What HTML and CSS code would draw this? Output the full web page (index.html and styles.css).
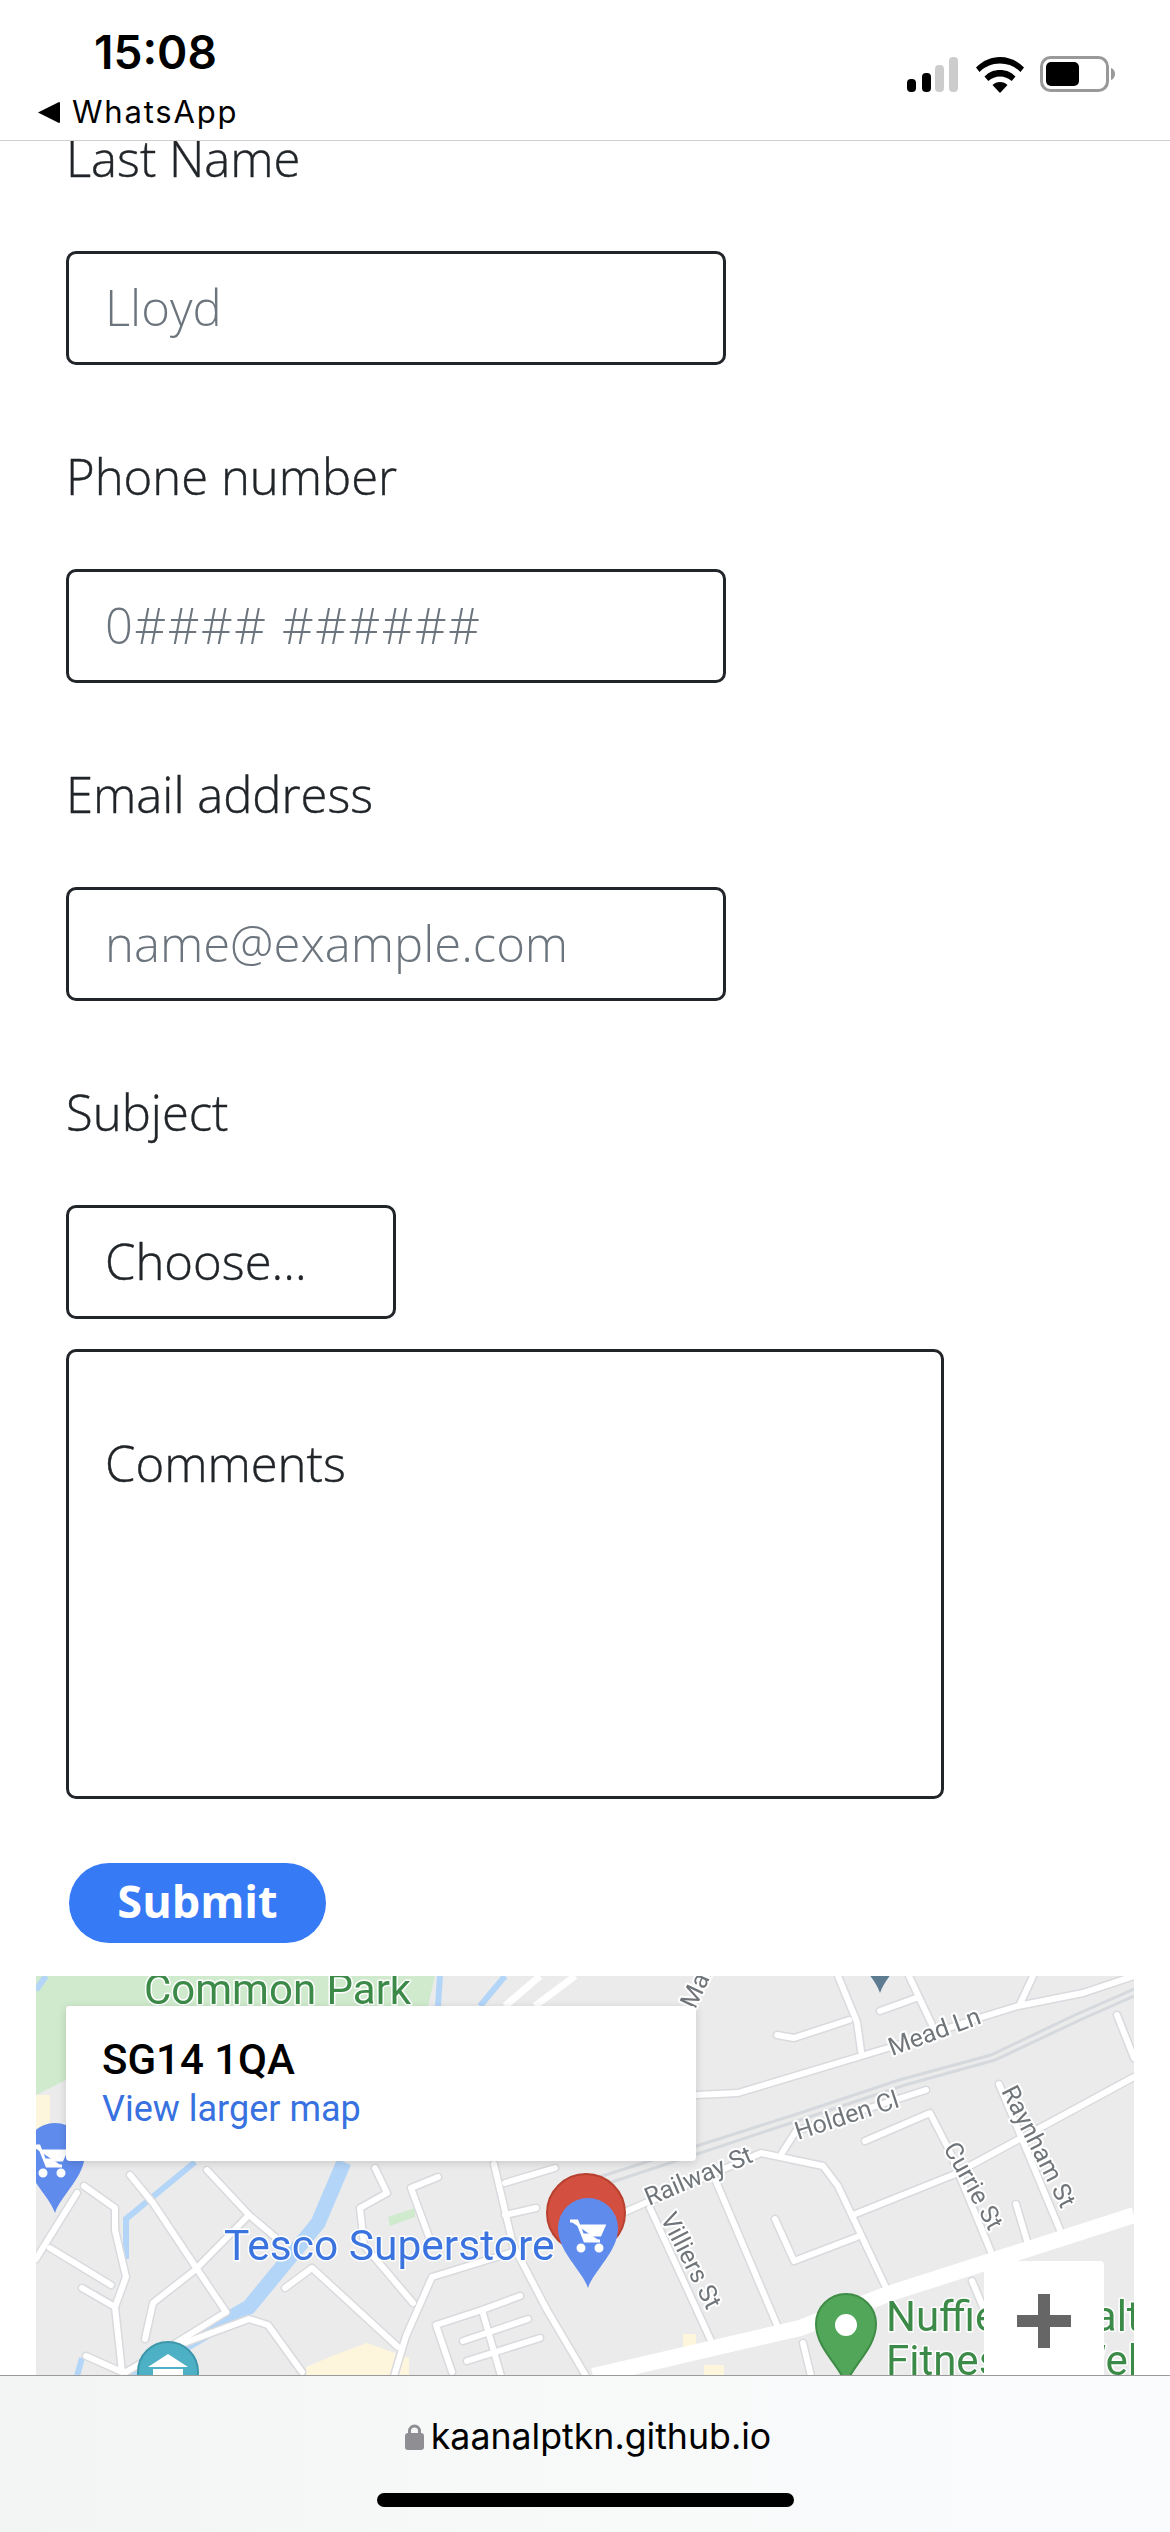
FILE: index.html
```html
<!DOCTYPE html>
<html lang="en">
<head>
    <meta charset="UTF-8">
    <meta name="viewport" content="width=device-width, initial-scale=1.0">
    <title>Contact</title>
    <link rel="stylesheet" href="styles.css">
</head>
<body>
    <div class="phone">
        <header class="status-bar">
            <div class="status-left">
                <div class="time">15:08</div>
                <div class="back">
                    <svg class="back-arrow" viewBox="0 0 22 21"><path d="M0 10.5 21 0a1 1 0 0 1 1 1v19a1 1 0 0 1-1 1z"/></svg>
                    <span>WhatsApp</span>
                </div>
            </div>
            <svg class="status-icons" viewBox="0 0 210 38">
                <rect x="0" y="23" width="9" height="13" rx="4"/>
                <rect x="15" y="17" width="9" height="19" rx="4"/>
                <rect class="off" x="28" y="9" width="9" height="27" rx="4"/>
                <rect class="off" x="42" y="1" width="9" height="35" rx="4"/>
                <g transform="translate(25 0)">
                    <path d="M92 11.500C85 4.500 77 1 68 1 59 1 51 4.500 44 11.500l3.500 4.500C53 10.500 60 7.500 68 7.500s15 3 20.500 8.500z"/>
                    <path d="M83.500 20.500C79 16 74 14 68 14s-11 2-15.500 6.500l3.800 4.600C60 22 63.500 20.500 68 20.500s8 1.500 11.700 4.600z"/>
                    <path d="M75.500 29C73.500 27 71 26 68 26s-5.500 1-7.500 3L68 37z"/>
                </g>
                <rect class="batt" x="134.500" y="1.500" width="66" height="33" rx="9"/>
                <rect x="139" y="6" width="33" height="24" rx="5"/>
                <path class="nub" d="M204 12c3 1 4 3.500 4 6s-1 5-4 6z"/>
            </svg>
        </header>

        <main class="page">
            <form class="contact-form">
                <label for="last-name">Last Name</label>
                <input class="field" type="text" id="last-name" placeholder="Lloyd">

                <label for="phone">Phone number</label>
                <input class="field phone-field" type="text" id="phone" placeholder="0#### ######">

                <label for="email">Email address</label>
                <input class="field" type="text" id="email" placeholder="name@example.com">

                <label for="subject">Subject</label>
                <select class="field subject" id="subject">
                    <option>Choose...</option>
                </select>

                <textarea class="comments" id="comments">Comments</textarea>

                <button class="submit" type="button">Submit</button>
            </form>

            <section class="map">
                <svg class="map-art" viewBox="36 1976 1098 400">
                    <defs>
                        <g id="roads">
                            <path d="M696 2095 738 2093 888 2048 979 2018 1018 2006 1083 1993 1134 1976"/>
                            <path d="M838 1976 857 2022 861 2051M777 2035 794 2038 849 2020M880 2011 916 1998M909 1976 934 2029M1033 1976 1020 2004M1117 2015 1134 2058"/>
                            <path d="M625 2212 650 2201 761 2153 823 2166 838 2186 888 2292"/>
                            <path d="M782 2153 796 2131 895 2100 926 2090"/>
                            <path d="M865 2141 930 2113 949 2150 991 2252"/>
                            <path d="M853 2215 953 2175 1134 2077M999 2084 1060 2230M1016 2204 1027 2241"/>
                            <path d="M775 2219 794 2261 857 2237M715 2179 777 2325M650 2208 712 2343M803 2343 811 2376M972 2281 983 2307"/>
                            <path d="M130 2175 153 2203 195 2266 226 2312M207 2170 249 2215 195 2270 153 2303 145 2339"/>
                            <path d="M249 2215 275 2237M285 2288 312 2268 398 2347M432 2277 406 2336 394 2376M432 2277 513 2252"/>
                            <path d="M494 2164 513 2245 547 2310 586 2376M226 2312 176 2343 126 2372M86 2356 122 2372 115 2307 126 2277 115 2230 115 2208 84 2186"/>
                            <path d="M82 2288 115 2307M50 2248 111 2285M36 2259 77 2193M184 2343 249 2319 268 2325 302 2372"/>
                            <path d="M436 2325 452 2372M463 2341 528 2319M467 2361 540 2338M482 2310 501 2376M436 2325 482 2310 520 2296"/>
                            <path d="M411 2188 438 2177M411 2188 429 2237M505 2183 555 2168M505 2215 536 2208"/>
                            <path d="M375 2168 387 2193 360 2208 364 2245 413 2303M460 2120 470 2150M240 2062 280 2070"/>
                        </g>
                        <path id="pin" d="M0 60C-6 42-30 24-30 0A30 30 0 1 1 30 0C30 24 6 42 0 60Z"/>
                        <g id="cart">
                            <path d="M-18-7H-11L-3 13H12M-9-2H16L12 7H-5"/>
                            <circle cx="-7" cy="20" r="3"/>
                            <circle cx="11" cy="20" r="3"/>
                        </g>
                    </defs>

                    <rect class="land" x="36" y="1976" width="1098" height="400"/>
                    <path class="park" d="M36 1976H435L428 2006H66V2080L36 2095Z"/>
                    <path class="park" d="M388 2217 415 2208V2217L390 2226Z"/>
                    <path class="sand" d="M36 2095H50V2130H36ZM337 2354 367 2343 409 2358V2376H306V2367ZM683 2334H696V2348H683ZM704 2365H724V2376H704Z"/>

                    <path class="river" d="M344 2162 318 2223 249 2307 180 2347 130 2376"/>
                    <path class="river thin" d="M195 2162 126 2219V2259M77 2376 82 2358M440 1976 438 2006M505 1976 480 2006M36 1990 46 1976"/>

                    <path class="rail" d="M593 2179 800 2113 899 2080 991 2055 1075 2015 1134 1989"/>
                    <path class="rail" d="M600 2186 800 2120 905 2085 995 2060 1080 2020 1134 1996"/>

                    <g class="road-case"><use href="#roads"/></g>
                    <g class="road-fill"><use href="#roads"/></g>
                    <path class="main-road" d="M593 2376 800 2328 888 2294 1134 2215"/>
                    <path class="side-road" d="M540 1976 505 2006M575 1976 535 2006"/>

                    <text class="street" transform="translate(892 2056) rotate(-20)">Mead Ln</text>
                    <text class="street" transform="translate(798 2140) rotate(-18)">Holden Cl</text>
                    <text class="street" transform="translate(649 2206) rotate(-23)">Railway St</text>
                    <text class="street" transform="translate(660 2218) rotate(63)">Villiers St</text>
                    <text class="street" transform="translate(943 2148) rotate(61)">Currie St</text>
                    <text class="street" transform="translate(1001 2091) rotate(63)">Raynham St</text>
                    <text class="street" transform="translate(695 2010) rotate(-65)">Mar</text>

                    <text class="label-green" x="144" y="2004">Common Park</text>
                    <text class="label-blue" x="224" y="2260">Tesco Superstore</text>
                    <text class="label-green" x="886" y="2331">Nuffield Health</text>
                    <text class="label-green" x="886" y="2375">Fitness &amp; Well</text>

                    <circle class="pin-red" cx="586" cy="2213" r="39"/>
                    <use class="pin-blue" href="#pin" transform="translate(55 2153)"/>
                    <use class="pin-cart" href="#cart" transform="translate(50 2153)"/>
                    <use class="pin-blue" href="#pin" transform="translate(588 2228)"/>
                    <use class="pin-cart" href="#cart" transform="translate(588 2228)"/>
                    <use class="pin-green" href="#pin" transform="translate(846 2324)"/>
                    <circle class="pin-dot" cx="846" cy="2325" r="11"/>
                    <use class="pin-teal" href="#pin" transform="translate(168 2372)"/>
                    <path class="pin-dot" d="M168 2354 188 2367H148ZM153 2369H183V2376H153Z"/>
                    <use class="pin-slate" href="#pin" transform="translate(880 1933)"/>
                </svg>

                <div class="info-card">
                    <div class="info-title">SG14 1QA</div>
                    <a class="info-link">View larger map</a>
                </div>
                <div class="zoom-btn">
                    <svg class="zoom-plus" viewBox="0 0 54 54"><path d="M21 0h12v21h21v12H33v21H21V33H0V21h21z"/></svg>
                </div>
            </section>
        </main>

        <footer class="url-bar">
            <div class="url">
                <svg class="lock" viewBox="0 0 19 27"><path d="M3 11V8a6.500 6.500 0 0 1 13 0v3h-3V8a3.500 3.500 0 0 0-7 0v3z"/><rect y="10" width="19" height="17" rx="3"/></svg>
                <span>kaanalptkn.github.io</span>
            </div>
            <div class="home-bar"></div>
        </footer>
    </div>
</body>
</html>
```

FILE: styles.css
```css
* {
    box-sizing: border-box;
}
body {
    margin: 0;
    background: white;
    font-family: "Open Sans", sans-serif;
    color: #212529;
}
.phone {
    width: 1170px;
    height: 2532px;
    display: flex;
    flex-direction: column;
    overflow: hidden;
}

/* status bar */
.status-bar {
    height: 141px;
    flex: none;
    display: flex;
    justify-content: space-between;
    border-bottom: 1px solid #cfcfcf;
    background: white;
    font-family: Inter, sans-serif;
    color: black;
}
.status-left {
    padding: 22px 0 0 38px;
}
.time {
    margin-left: 56px;
    font-size: 46px;
    font-weight: 600;
    line-height: 60px;
}
.back {
    display: flex;
    align-items: center;
    gap: 12px;
    margin-top: 10px;
    font-size: 31px;
    font-weight: 400;
    line-height: 40px;
    letter-spacing: 1.8px;
}
.back-arrow {
    width: 22px;
    height: 21px;
}
.status-icons {
    width: 210px;
    height: 38px;
    margin: 56px 53px 0 0;
}
.status-icons .off {
    fill: #cccccc;
}
.status-icons .batt {
    fill: none;
    stroke: #999999;
    stroke-width: 3;
}
.status-icons .nub {
    fill: #999999;
}

/* form */
.page {
    flex: 1;
    min-height: 0;
    overflow: hidden;
}
.contact-form {
    display: flex;
    flex-direction: column;
    align-items: flex-start;
    margin-top: -19px;
    padding-left: 66px;
}
label {
    font-size: 49px;
    font-weight: 300;
    line-height: 72px;
    margin-bottom: 57px;
    -webkit-text-stroke: 0.4px #212529;
}
.field {
    width: 660px;
    height: 114px;
    margin-bottom: 75px;
    padding: 0 36px 3px;
    border: 3px solid #212529;
    border-radius: 10px;
    background: white;
    font-family: "Open Sans", sans-serif;
    font-size: 49px;
    font-weight: 300;
    color: #212529;
    outline: none;
}
.field::placeholder {
    color: #6c757d;
    opacity: 1;
}
.phone-field {
    letter-spacing: 1.6px;
}
.subject {
    width: 330px;
    margin-bottom: 30px;
    appearance: none;
    -webkit-appearance: none;
    -webkit-text-stroke: 0.4px #212529;
}
.comments {
    width: 878px;
    height: 450px;
    padding: 75px 36px 0;
    border: 3px solid #212529;
    border-radius: 10px;
    font-family: "Open Sans", sans-serif;
    font-size: 49px;
    font-weight: 300;
    line-height: 72px;
    color: #212529;
    -webkit-text-stroke: 0.4px #212529;
    outline: none;
    resize: none;
}
.submit {
    width: 257px;
    height: 80px;
    margin: 64px 0 33px 3px;
    padding: 0 0 5px;
    border: none;
    border-radius: 40px;
    background-color: #377af6;
    color: white;
    font-family: "Open Sans", sans-serif;
    font-size: 45px;
    font-weight: 700;
    cursor: pointer;
}

/* map */
.map {
    position: relative;
    width: 1098px;
    height: 400px;
    margin-left: 36px;
    overflow: hidden;
    font-family: Roboto, sans-serif;
}
.map-art {
    display: block;
    width: 1098px;
    height: 400px;
    filter: blur(0.6px);
}
.land {
    fill: #ebebeb;
}
.park {
    fill: #cfeacd;
}
.sand {
    fill: #fdf5dc;
}
.river {
    fill: none;
    stroke: #b3d5f7;
    stroke-width: 15;
}
.river.thin {
    stroke-width: 6;
}
.rail {
    fill: none;
    stroke: #d5d9dd;
    stroke-width: 3;
}
.road-case {
    fill: none;
    stroke: #d8dade;
    stroke-width: 9;
    stroke-linecap: round;
    stroke-linejoin: round;
}
.road-fill {
    fill: none;
    stroke: white;
    stroke-width: 6;
    stroke-linecap: round;
    stroke-linejoin: round;
}
.main-road {
    fill: none;
    stroke: white;
    stroke-width: 16;
}
.side-road {
    fill: none;
    stroke: white;
    stroke-width: 7;
}
.street,
.label-green,
.label-blue {
    paint-order: stroke;
    stroke: white;
    stroke-linejoin: round;
}
.street {
    font-size: 25px;
    fill: #70757a;
    stroke-width: 4;
}
.label-green {
    font-size: 42px;
    fill: #3c8a48;
    stroke-width: 3;
}
.label-blue {
    font-size: 42.500px;
    fill: #3b74df;
    stroke-width: 3;
}
.pin-red {
    fill: #d34f3f;
    stroke: #b8402f;
    stroke-width: 2;
}
.pin-blue {
    fill: #5f8bed;
}
.pin-cart {
    fill: white;
    stroke: white;
    stroke-width: 3;
}
.pin-green {
    fill: #52a65a;
    stroke: #3f8c47;
    stroke-width: 2;
}
.pin-teal {
    fill: #4eb0c4;
    stroke: #3d97aa;
    stroke-width: 2;
}
.pin-slate {
    fill: #5d7b91;
}
.pin-dot {
    fill: white;
}
.info-card {
    position: absolute;
    left: 30px;
    top: 30px;
    width: 630px;
    height: 155px;
    padding: 30px 36px 0;
    border-radius: 4px;
    background: white;
    box-shadow: 0 2px 8px rgba(0, 0, 0, 0.15);
}
.info-title {
    font-size: 42px;
    font-weight: 500;
    line-height: 48px;
    color: black;
}
.info-link {
    display: block;
    margin-top: 4px;
    font-size: 36px;
    line-height: 42px;
    color: #3871e0;
}
.zoom-btn {
    position: absolute;
    left: 948px;
    top: 285px;
    width: 120px;
    height: 160px;
    padding: 33px 33px 0;
    border-radius: 4px;
    background: white;
}
.zoom-plus {
    display: block;
    width: 54px;
    height: 54px;
    fill: #666666;
}

/* safari bar */
.url-bar {
    position: relative;
    height: 157px;
    flex: none;
    border-top: 1px solid #9a9a9a;
    background: linear-gradient(90deg, #f3f4f4, #f7f8f8 40%, #fafbfc);
    font-family: Inter, sans-serif;
}
.url {
    display: flex;
    justify-content: center;
    align-items: center;
    gap: 7px;
    padding: 36px 0 0 6px;
    font-size: 35.700px;
    line-height: 48px;
    color: black;
}
.lock {
    width: 19px;
    height: 27px;
    fill: #8e8e93;
}
.home-bar {
    width: 417px;
    height: 14px;
    margin: 33px auto 0;
    border-radius: 7px;
    background: black;
}
```
